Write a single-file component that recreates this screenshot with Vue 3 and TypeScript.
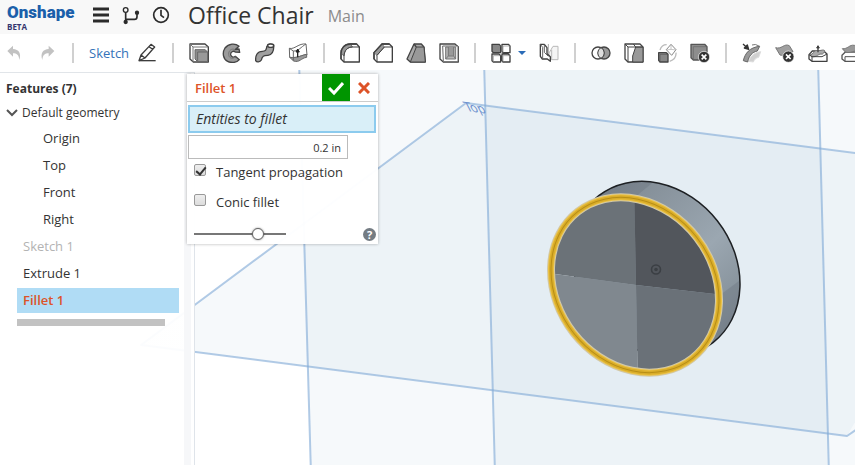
<script setup lang="ts">
import { ref } from 'vue'

interface Feature {
  name: string
  state?: 'muted' | 'active'
}

const geometry: string[] = ['Origin', 'Top', 'Front', 'Right']
const features: Feature[] = [
  { name: 'Sketch 1', state: 'muted' },
  { name: 'Extrude 1' },
  { name: 'Fillet 1', state: 'active' },
]

const radius = ref('0.2 in')
const tangent = ref(true)
const conic = ref(false)
const opacity = ref(72)
</script>

<template>
  <div class="app">
    <header class="header">
      <div class="logo">
        <span class="logo-name">Onshape</span>
        <span class="logo-tag">BETA</span>
      </div>
      <nav class="header-icons">
        <button class="icon-btn" aria-label="Menu">
          <svg viewBox="0 0 60 60"><path d="M6 12H54M6 30H54M6 48H54" fill="none" stroke="#2b2b2b" stroke-width="9" /></svg>
        </button>
        <button class="icon-btn" aria-label="Versions">
          <svg viewBox="0 0 60 60" fill="none" stroke="#2b2b2b" stroke-width="5">
            <circle cx="14" cy="15" r="7" stroke-width="4" />
            <path d="M14 22V52M14 43H40Q48 43 48 35V24" />
            <circle cx="14" cy="51" r="4" fill="#2b2b2b" /><circle cx="48" cy="23" r="4" fill="#2b2b2b" />
          </svg>
        </button>
        <button class="icon-btn" aria-label="History">
          <svg viewBox="0 0 60 60" fill="none" stroke="#2b2b2b" stroke-width="5">
            <circle cx="30" cy="30" r="22" /><path d="M30 14V31L39 38" />
          </svg>
        </button>
      </nav>
      <h1 class="title">Office Chair</h1>
      <span class="branch">Main</span>
    </header>

    <div class="toolbar">
      <button class="icon-btn" aria-label="Undo">
        <svg viewBox="0 0 60 60"><path d="M10 24L27 8V18C44 19 53 31 46 51C45 36 38 31 27 31V41Z" fill="#c2c2c2" /></svg>
      </button>
      <button class="icon-btn" aria-label="Redo">
        <svg viewBox="0 0 60 60"><path d="M52 24L35 8V18C18 19 9 31 16 51C17 36 24 31 35 31V41Z" fill="#c2c2c2" /></svg>
      </button>
      <span class="sep"></span>
      <button class="sketch-btn">
        <span>Sketch</span>
        <svg viewBox="0 0 60 60" fill="none" stroke="#3c3c3c" stroke-width="4">
          <path d="M6 53L12 36L42 4L53 12L24 45ZM12 36L24 45M36 11L47 19" stroke-linejoin="round" />
          <path d="M6 53H56" />
        </svg>
      </button>
      <span class="sep"></span>
      <button class="icon-btn" aria-label="Extrude">
        <svg viewBox="0 0 60 60" stroke="#404040" stroke-width="4" stroke-linejoin="round">
          <path d="M3 3H48L58 12V57H13L3 48Z" fill="#fff" />
          <path d="M3 3L12 12V57M12 12H58" fill="none" stroke="#777" stroke-width="3" />
          <path d="M18 20H48L56 27V56H26L18 48Z" fill="#8c8c8c" stroke="#666" stroke-width="3" />
          <path d="M26 27H56V56H26Z" fill="#999" stroke="#666" stroke-width="3" />
        </svg>
      </button>
      <button class="icon-btn" aria-label="Revolve">
        <svg viewBox="0 0 60 60" stroke="#444" stroke-width="4" stroke-linejoin="round">
          <path d="M50 9C40 0 20 1 9 15C0 29 3 48 17 55C29 61 44 59 52 50L40 40C34 45 27 41 26 35C25 27 34 22 40 27L53 28L51 18L39 20L51 10Z" fill="#9b9b9b" />
          <path d="M39 20C29 15 19 23 20 34C20 44 30 51 40 41" fill="none" stroke="#777" stroke-width="3" />
        </svg>
      </button>
      <button class="icon-btn" aria-label="Sweep">
        <svg viewBox="0 0 60 60" stroke="#404040" stroke-width="4">
          <path d="M2 53C1 37 7 25 22 25C34 25 33 19 36 10C37 3 49 1 56 6C57 20 53 35 39 37C26 38 22 38 19 51C15 58 5 58 2 53Z" fill="#a0a0a0" />
          <ellipse cx="47" cy="8" rx="9" ry="5" fill="#fff" />
        </svg>
      </button>
      <button class="icon-btn" aria-label="Loft">
        <svg viewBox="0 0 60 60" stroke="#666" stroke-width="3" stroke-linejoin="round">
          <path d="M4 16C20 20 32 0 54 3L57 36C41 33 32 49 5 43Z" fill="#fff" />
          <path d="M5 43L17 54C35 60 39 45 56 43V34C42 36 28 46 5 43Z" fill="#999" />
          <path d="M4 16L16 24C31 25 39 12 54 3M16 24V53" fill="none" />
          <path d="M29 43V24" stroke="#222" stroke-width="4" />
          <path d="M29 18L24 27H34Z" fill="#222" stroke="#222" />
        </svg>
      </button>
      <span class="sep"></span>
      <button class="icon-btn" aria-label="Fillet">
        <svg viewBox="0 0 60 60" stroke="#404040" stroke-width="4" stroke-linejoin="round">
          <path d="M3 32C3 15 14 3 31 3H50L58 12V57H12L3 48Z" fill="#fff" />
          <path d="M3 31C3 14 15 3 31 3L38 12C23 12 13 20 12 39Z" fill="#999" stroke="#777" stroke-width="3" />
          <path d="M12 57V39C13 22 23 12 38 12H58" fill="none" stroke-width="3" />
          <path d="M3 48V32C3 15 14 3 31 3H50" fill="none" />
        </svg>
      </button>
      <button class="icon-btn" aria-label="Chamfer">
        <svg viewBox="0 0 60 60" stroke="#404040" stroke-width="4" stroke-linejoin="round">
          <path d="M3 29L27 3H49L58 12V57H12L3 48Z" fill="#fff" />
          <path d="M3 29L27 3L34 12L12 37Z" fill="#999" stroke="#777" stroke-width="3" />
          <path d="M12 57V37L34 12H58" fill="none" stroke-width="3" />
          <path d="M3 48V29L27 3H49" fill="none" />
        </svg>
      </button>
      <button class="icon-btn" aria-label="Draft">
        <svg viewBox="0 0 60 60" stroke="#444" stroke-width="4" stroke-linejoin="round">
          <path d="M24 3H46L54 12L58 57H13L3 48Z" fill="#aaa" />
          <path d="M13 57L31 12H54L58 57Z" fill="#999" stroke-width="3" />
          <path d="M24 3L31 12" />
        </svg>
      </button>
      <button class="icon-btn" aria-label="Shell">
        <svg viewBox="0 0 60 60" stroke="#444" stroke-width="4" stroke-linejoin="round">
          <path d="M3 3H48L58 12V57H13L3 48Z" fill="#fff" />
          <path d="M11 9H57V56H13Z" fill="#fff" stroke="#666" stroke-width="3" />
          <path d="M20 12H50V48H20Z" fill="#b5b5b5" stroke="#777" stroke-width="3" />
          <path d="M28 12V39H44V12M20 48L28 39M50 48L44 39" fill="#999" stroke="#777" stroke-width="3" />
        </svg>
      </button>
      <span class="sep"></span>
      <div class="split-btn">
        <button class="icon-btn" aria-label="Pattern">
          <svg viewBox="0 0 60 60" stroke="#404040" stroke-width="4" stroke-linejoin="round">
            <path d="M3 4H24L29 9V29H7L3 25Z" fill="#888" />
            <path d="M33 4H52L57 9V29H36L33 25ZM3 33H24L29 38V57H7L3 53ZM33 33H52L57 38V57H36L33 53Z" fill="#fff" />
            <path d="M7 9H29M36 9V29M36 9H57M7 38V57M7 38H29M36 38V57M36 38H57" fill="none" stroke="#888" stroke-width="2" />
          </svg>
        </button>
        <button class="caret" aria-label="More patterns">
          <svg viewBox="0 0 8 5"><path d="M0 0H8L4 4Z" fill="#2b6cb8" /></svg>
        </button>
      </div>
      <button class="icon-btn" aria-label="Mirror">
        <svg viewBox="0 0 60 60" stroke-width="4" stroke-linejoin="round">
          <path d="M36 20L42 10H57V50H38L30 44V30L36 20ZM38 50V20" fill="#f5f5f5" stroke="#b9b9b9" stroke-width="3" />
          <path d="M28 3V38" stroke="#aaa" stroke-width="3" />
          <path d="M4 4H16L24 14V32L34 41V55L25 48H10L4 40Z" fill="#fff" stroke="#404040" />
          <path d="M4 4L11 13V48M16 4V28L28 40" fill="none" stroke="#666" stroke-width="3" />
        </svg>
      </button>
      <span class="sep"></span>
      <button class="icon-btn" aria-label="Boolean">
        <svg viewBox="0 0 60 60" stroke="#444" stroke-width="4">
          <circle cx="39" cy="30" r="18" fill="#999" />
          <circle cx="21" cy="30" r="18" fill="#fff" fill-opacity="0.6" />
          <path d="M30 14A18 18 0 0 1 30 46A18 18 0 0 1 30 14" fill="#ddd" stroke-width="3" />
        </svg>
      </button>
      <button class="icon-btn" aria-label="Split">
        <svg viewBox="0 0 60 60" stroke="#444" stroke-width="4" stroke-linejoin="round">
          <path d="M3 3H48L57 12V57H12L3 48Z" fill="#fff" />
          <path d="M35 12H57V57H26V39Z" fill="#999" stroke-width="3" />
          <path d="M3 3L12 12V57M12 12H57M28 3L35 12" fill="none" stroke-width="3" />
        </svg>
      </button>
      <button class="icon-btn" aria-label="Transform">
        <svg viewBox="0 0 60 60" stroke-width="4" stroke-linejoin="round">
          <path d="M9 21C12 11 20 5 29 5M57 29C58 43 50 51 38 55" fill="none" stroke="#bbb" />
          <path d="M42 4L57 20L44 37L28 20Z" fill="#fff" stroke="#888" stroke-width="3" />
          <path d="M42 5V19L28 21M42 19L57 21" fill="none" stroke="#aaa" stroke-width="2" />
          <path d="M5 29H28L33 34V57H9L5 52Z" fill="#888" stroke="#444" />
          <path d="M9 34H33M9 34V57" stroke="#555" stroke-width="2" />
        </svg>
      </button>
      <button class="icon-btn" aria-label="Delete part">
        <svg viewBox="0 0 60 60" stroke-linejoin="round">
          <path d="M3 4H44L51 11V51H10L3 44Z" fill="#8d8d8d" stroke="#555" stroke-width="4" />
          <path d="M10 11H50M10 11V50" stroke="#666" stroke-width="2" />
          <circle cx="42" cy="42" r="17" fill="#333" stroke="#fff" stroke-width="2" />
          <path d="M35 35L49 49M49 35L35 49" stroke="#fff" stroke-width="5" />
        </svg>
      </button>
      <span class="sep"></span>
      <button class="icon-btn" aria-label="Move face">
        <svg viewBox="0 0 60 60" stroke-width="3" stroke-linejoin="round">
          <path d="M20 55C26 38 38 28 56 26L50 43C42 44 37 50 34 57Z" fill="#d0d0d0" stroke="#ddd" />
          <path d="M4 53C9 31 23 13 53 10L46 24C31 27 20 39 17 57Z" fill="#999" stroke="#666" />
          <path d="M30 6Q39 1 53 10" fill="none" stroke="#777" />
          <path d="M3 3L13 12M20 19L7 15L16 6Z" fill="#333" stroke="#333" stroke-width="4" />
        </svg>
      </button>
      <button class="icon-btn" aria-label="Delete face">
        <svg viewBox="0 0 60 60" stroke-linejoin="round">
          <path d="M2 14C19 20 28 0 43 8L54 26C40 25 30 41 15 36Z" fill="#a0a0a0" stroke="#777" stroke-width="3" />
          <circle cx="40" cy="41" r="17" fill="#333" stroke="#fff" stroke-width="2" />
          <path d="M33 34L47 48M47 34L33 48" stroke="#fff" stroke-width="5" />
        </svg>
      </button>
      <button class="icon-btn" aria-label="Thicken">
        <svg viewBox="0 0 60 60" stroke="#404040" stroke-width="4" stroke-linejoin="round">
          <path d="M3 35L13 24H47L57 33V55H12L3 48Z" fill="#fff" />
          <path d="M5 36C17 35 17 21 28 22C39 25 45 17 51 24L43 34C33 29 26 44 12 41Z" fill="#aaa" stroke="#777" stroke-width="3" />
          <path d="M3 35L12 41V55M12 41H42L57 33" fill="none" stroke-width="3" />
          <path d="M30 28V14" />
          <path d="M30 8L26 15H34Z" fill="#333" stroke-width="3" />
        </svg>
      </button>
      <button class="icon-btn" aria-label="Replace face">
        <svg viewBox="0 0 60 60" stroke="#555" stroke-width="4" stroke-linejoin="round">
          <path d="M3 37L13 27H58V55H12L3 48Z" fill="#fff" />
          <path d="M12 55V41H58" fill="none" stroke-width="3" />
          <path d="M4 17C20 19 25 4 40 7L58 12V23C40 20 28 33 13 27Z" fill="#999" stroke="#777" stroke-width="3" />
        </svg>
      </button>
    </div>

    <main class="workspace">
      <svg class="viewport" viewBox="0 70 855 395" preserveAspectRatio="xMinYMin slice" aria-label="Model view">
        <defs>
          <linearGradient id="side" x1="0" y1="0" x2="1" y2="1">
            <stop offset="0.1" stop-color="#77818a" />
            <stop offset="0.6" stop-color="#9ba7b1" />
            <stop offset="0.9" stop-color="#7c8790" />
          </linearGradient>
          <clipPath id="face"><ellipse cx="635" cy="285" rx="91" ry="76" transform="rotate(52 635 285)" /></clipPath>
          <clipPath id="back"><ellipse cx="656" cy="269" rx="93" ry="78" transform="rotate(52 656 269)" /></clipPath>
        </defs>
        <g class="plane">
          <path d="M299 60L818 60L829 475L311 475Z" />
          <path d="M484 60H870V475H495Z" />
          <path d="M141 345L466 103L1000 172L847 436Z" />
        </g>
        <g class="edges">
          <path d="M299 60L311 475M484 60L495 475M818 60L829 475" />
          <path d="M870 155L466 103L141 345L847 436L870 420" />
        </g>
        <text class="plane-label" transform="translate(467 111) rotate(8) skewX(35)">Top</text>

        <g clip-path="url(#back)">
          <rect x="540" y="170" width="210" height="190" fill="url(#side)" />
          <path d="M560 170H668L640 193L600 230Z" fill="#5b656e" opacity="0.25" />
          <path d="M750 273L720 295L690 370H760Z" fill="#5b656e" opacity="0.25" />
        </g>
        <ellipse cx="656" cy="269" rx="93" ry="78" transform="rotate(52 656 269)" fill="none" stroke="#1d2023" stroke-width="1.5" />
        <g clip-path="url(#face)">
          <path d="M540 180H634L636 285L540 272Z" fill="#6b7278" />
          <path d="M634 180H740V297L636 285Z" fill="#52565c" />
          <path d="M540 272L636 285L638 390H540Z" fill="#80888f" />
          <path d="M636 285L740 297V390H638Z" fill="#6a7178" />
        </g>
        <g class="rim">
          <ellipse cx="635" cy="285" rx="93" ry="78" transform="rotate(52 635 285)" stroke="#d2c9a8" stroke-width="8" />
          <ellipse cx="635" cy="285" rx="93" ry="78" transform="rotate(52 635 285)" stroke="#ecc244" stroke-width="6" />
          <ellipse cx="635" cy="285" rx="93" ry="78" transform="rotate(52 635 285)" stroke="#d9ad2a" stroke-width="4" />
          <ellipse cx="635" cy="285" rx="93" ry="78" transform="rotate(52 635 285)" stroke="#b88e16" stroke-width="1" />
        </g>
        <circle cx="656" cy="269.5" r="4.5" fill="none" stroke="#3b3f44" stroke-width="1.6" />
        <circle cx="656" cy="269.5" r="1.8" fill="#3b3f44" />
      </svg>

      <aside class="sidebar">
        <h2>Features (7)</h2>
        <button class="group">
          <svg viewBox="0 0 12 8"><path d="M1 1L6 6L11 1" fill="none" stroke="#555" stroke-width="2" /></svg>
          Default geometry
        </button>
        <ul class="tree">
          <li v-for="item in geometry" :key="item" class="child">{{ item }}</li>
          <li v-for="item in features" :key="item.name" :class="item.state">{{ item.name }}</li>
        </ul>
        <div class="rollback"></div>
      </aside>

      <form class="dialog" @submit.prevent>
        <div class="dialog-head">
          <strong>Fillet 1</strong>
          <button class="accept" aria-label="Accept">
            <svg viewBox="0 0 16 16"><path d="M1 8L6 13L15 3" fill="none" stroke="#fff" stroke-width="3" /></svg>
          </button>
          <button class="cancel" type="button" aria-label="Cancel">
            <svg viewBox="0 0 12 12"><path d="M1 1L11 11M11 1L1 11" fill="none" stroke="#dd5328" stroke-width="3" /></svg>
          </button>
        </div>
        <div class="dialog-body">
          <input class="entities" type="text" placeholder="Entities to fillet" aria-label="Entities to fillet" readonly />
          <input v-model="radius" class="radius" type="text" aria-label="Radius" />
          <label class="check"><input v-model="tangent" type="checkbox" /><span>Tangent propagation</span></label>
          <label class="check"><input v-model="conic" type="checkbox" /><span>Conic fillet</span></label>
          <div class="dialog-foot">
            <input v-model="opacity" type="range" min="0" max="100" aria-label="Preview" />
            <button class="help" type="button" aria-label="Help">?</button>
          </div>
        </div>
      </form>
    </main>
  </div>
</template>

<style>
body {
  margin: 0;
  overflow: hidden;
}
</style>

<style scoped>
* {
  box-sizing: border-box;
}
.app {
  display: flex;
  flex-direction: column;
  min-height: 100vh;
  background: #fff;
  color: #333;
  font-family: 'Open Sans', 'Noto Sans', sans-serif;
  font-size: 13px;
}
button {
  padding: 0;
  border: 0;
  background: none;
  color: inherit;
  font: inherit;
}
svg {
  display: block;
}
.icon-btn,
.icon-btn svg,
.sketch-btn svg {
  flex: none;
  width: 20px;
  height: 20px;
}
.header {
  display: flex;
  height: 34px;
  padding: 0 7px;
  background: #f8f8f8;
}
.logo {
  display: flex;
  flex-direction: column;
  width: 84px;
  padding-top: 2px;
}
.logo-name {
  color: #1b5faa;
  font-family: Roboto, 'Open Sans', sans-serif;
  font-size: 17px;
  font-weight: 900;
  line-height: 20px;
}
.logo-tag {
  color: #35366f;
  font-size: 8px;
  font-weight: 700;
  line-height: 10px;
}
.header-icons {
  display: flex;
  gap: 10px;
  padding-top: 5px;
}
.title {
  margin: 0 0 0 17px;
  font-size: 23px;
  font-weight: 500;
  line-height: 30px;
}
.branch {
  margin-left: 14px;
  color: #8c8c8c;
  font-size: 16px;
  line-height: 32px;
}
.toolbar {
  display: flex;
  align-items: center;
  gap: 13px;
  height: 36px;
  padding: 2px 0 0 4px;
  overflow: hidden;
}
.sep {
  flex: none;
  width: 2px;
  height: 20px;
  margin: 0 2px;
  background: #d0d0d0;
}
.sketch-btn {
  display: flex;
  flex: none;
  align-items: center;
  gap: 8px;
  color: #3573b9;
}
.split-btn {
  display: flex;
  flex: none;
  align-items: center;
  gap: 7px;
}
.caret svg {
  width: 8px;
  height: 5px;
}
.workspace {
  display: grid;
  position: relative;
  flex: 1;
  grid-template-columns: 195px 1fr;
}
.viewport {
  position: absolute;
  inset: 0;
  width: 100%;
  height: 100%;
}
.plane {
  fill: #5080ae;
  fill-opacity: 0.05;
}
.edges {
  fill: none;
  stroke: #7fa8d6;
  stroke-linejoin: round;
  stroke-opacity: 0.6;
  stroke-width: 2;
}
.plane-label {
  fill: #6f93cf;
  font-family: 'DejaVu Sans', sans-serif;
  font-size: 12px;
}
.rim {
  fill: none;
}
.sidebar {
  position: relative;
  margin-top: 2px;
  padding: 5px 15px 0 6px;
  border-top: 1px solid #e1e5e9;
  border-right: 1px solid #dfe4ea;
  background: linear-gradient(to left, #fff 3px, #f6f7f9 3px, #f6f7f9 10px, rgba(255, 255, 255, 0.95) 10px);
}
.sidebar h2 {
  margin: 0;
  font-size: 12px;
  font-weight: 700;
  line-height: 22px;
}
.group {
  display: flex;
  align-items: center;
  gap: 4px;
  font-size: 12px;
  line-height: 26px;
}
.group svg {
  width: 12px;
  height: 8px;
}
.tree {
  display: grid;
  gap: 2px;
  margin: 0 0 0 11px;
  padding: 0;
  list-style: none;
}
.tree li {
  padding-left: 6px;
  line-height: 25px;
}
.tree .child {
  padding-left: 26px;
}
.tree .muted {
  color: #b3b3b3;
}
.tree .active {
  background: #b0dcf5;
  color: #dd5328;
  font-weight: 600;
}
.rollback {
  height: 7px;
  margin: 6px 14px 0 11px;
  background: #c2c2c2;
}
.dialog {
  position: absolute;
  top: 4px;
  left: 187px;
  width: 191px;
  background: rgba(255, 255, 255, 0.97);
  box-shadow: 0 0 3px rgba(0, 0, 0, 0.3);
}
.dialog-head {
  display: flex;
  height: 28px;
  border-bottom: 1px solid #ccc;
  color: #dd5328;
  line-height: 28px;
}
.dialog-head strong {
  flex: 1;
  padding-left: 8px;
  font-weight: 600;
}
.accept,
.cancel {
  display: grid;
  place-items: center;
  width: 28px;
}
.accept {
  background: #009500;
}
.accept svg {
  width: 16px;
  height: 16px;
}
.cancel svg {
  width: 12px;
  height: 12px;
}
.dialog-body {
  display: flex;
  flex-direction: column;
  padding: 3px 2px 0 1px;
}
.entities,
.radius {
  margin: 0;
  outline: 0;
  color: #333;
  font-family: inherit;
}
.entities {
  width: 100%;
  height: 28px;
  padding: 0 6px 2px;
  border: 2px solid #8ccbee;
  background: #d9eff8;
  font-size: 14px;
  font-style: italic;
}
.entities::placeholder {
  color: #333;
  opacity: 1;
}
.radius {
  width: 160px;
  height: 24px;
  margin: 2px 0 3px;
  padding: 0 6px;
  border: 1px solid #bbb;
  background: #fff;
  font-size: 11px;
  text-align: right;
}
.check {
  display: flex;
  gap: 10px;
  height: 30px;
  padding-left: 6px;
  line-height: 20px;
}
.check input {
  appearance: none;
  width: 12px;
  height: 12px;
  margin: 2px 0 0;
  border: 1px solid #999;
  border-radius: 2px;
  background: linear-gradient(#eee, #dcdcdc);
}
.check input:checked::after {
  display: block;
  width: 4px;
  height: 8px;
  margin: 0 0 0 3px;
  border: solid #333;
  border-width: 0 2px 2px 0;
  content: '';
  transform: rotate(40deg);
}
.dialog-foot {
  display: flex;
  align-items: center;
  justify-content: space-between;
  height: 20px;
  margin-top: 2px;
  padding-left: 6px;
}
.dialog-foot input {
  appearance: none;
  width: 92px;
  height: 13px;
  margin: 0;
  background: linear-gradient(#777, #777) center / 100% 2px no-repeat;
}
.dialog-foot input::-webkit-slider-thumb {
  appearance: none;
  width: 12px;
  height: 12px;
  border: 1px solid #666;
  border-radius: 50%;
  background: #fff;
  box-shadow: 0 0 2px rgba(0, 0, 0, 0.5);
}
.help {
  width: 13px;
  height: 13px;
  border-radius: 50%;
  background: #747c83;
  color: #fff;
  font-size: 11px;
  font-weight: 700;
  line-height: 13px;
}
</style>
